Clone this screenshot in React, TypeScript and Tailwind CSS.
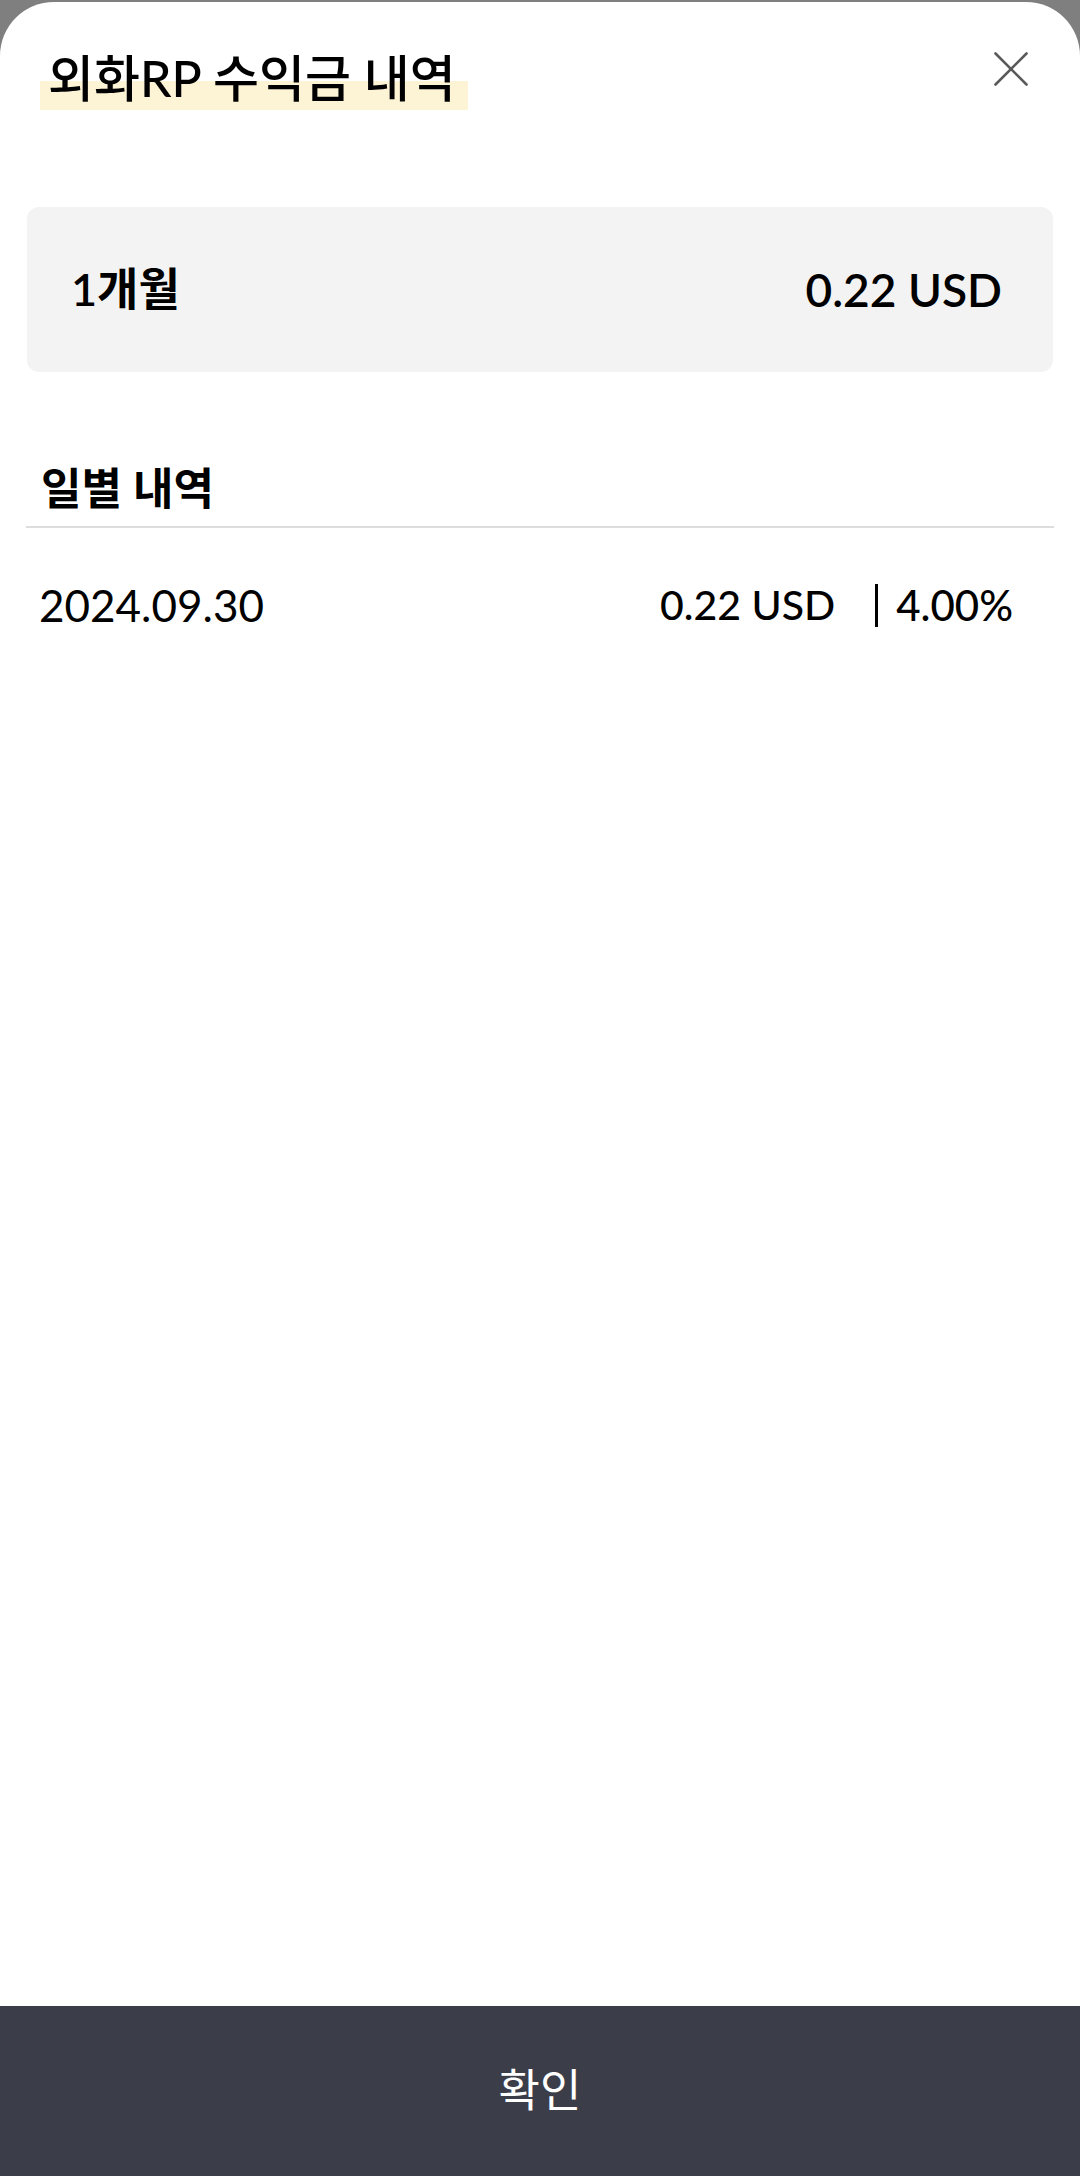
const font = { fontFamily: 'Lato, "Noto Sans CJK KR", sans-serif' };

const CloseIcon = () => (
  <svg width="34" height="34" viewBox="0 0 34 34" fill="none" stroke="#5a5a5a" strokeWidth="2.6" strokeLinecap="round">
    <line x1="1.5" y1="1.5" x2="32.5" y2="32.5" />
    <line x1="32.5" y1="1.5" x2="1.5" y2="32.5" />
  </svg>
);

const EarningsSheet = () => {
  return (
    <div className="w-[1080px] h-[2176px] bg-[#7f7f7f] flex flex-col" style={font}>
      <div className="mt-[2px] flex-1 bg-white rounded-t-[54px] flex flex-col overflow-hidden">
        <div className="flex items-start justify-between pl-[40px] pr-[52px] pt-[44px]">
          <h1 className="inline-block pl-[8px] pr-[12px] text-[50px] leading-[64px] font-medium text-black bg-[linear-gradient(transparent_54%,#fdf3d5_54%)]">
            외화RP 수익금 내역
          </h1>
          <button className="mt-[6px]">
            <CloseIcon />
          </button>
        </div>

        <div className="mx-[27px] mt-[97px] h-[165px] rounded-[12px] bg-[#f3f3f3] flex items-center justify-between pl-[44px] pr-[51px]">
          <span className="text-[45px] font-semibold text-black">1개월</span>
          <span className="text-[46px] font-semibold text-black">0.22 USD</span>
        </div>

        <div className="mx-[26px] mt-[86px] border-b-2 border-[#dddddd] pl-[15px] pb-[8px]">
          <h2 className="text-[44px] leading-[60px] font-semibold text-black">일별 내역</h2>
        </div>

        <div className="flex items-center justify-between pl-[39px] pr-[67px] h-[154px]">
          <span className="text-[44px] text-black">2024.09.30</span>
          <div className="flex items-center text-[41px] font-medium text-black">
            <span>0.22 USD</span>
            <span className="ml-[40px] mr-[18px] w-[3px] h-[43px] bg-black" />
            <span className="text-[42px]">4.00%</span>
          </div>
        </div>

        <div className="flex-1" />

        <button className="h-[170px] w-full bg-[#3b3e49] text-white text-[45px]">확인</button>
      </div>
    </div>
  );
};

export default function App() {
  return <EarningsSheet />;
}
